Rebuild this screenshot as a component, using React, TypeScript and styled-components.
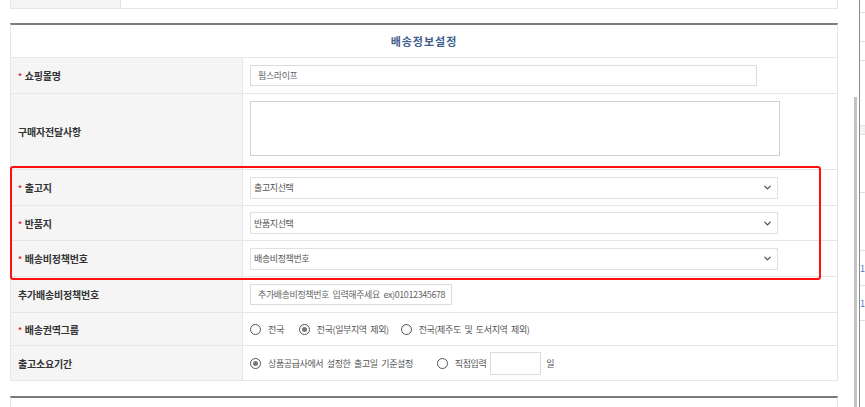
import React from 'react';
import styled, { createGlobalStyle } from 'styled-components';
import { ChevronDown } from 'lucide-react';

const GlobalStyle = createGlobalStyle`
    body {
        margin: 0;
        background: #ffffff;
        font-family: "Noto Sans CJK KR", "Noto Sans", sans-serif;
        color: #333;
    }
`;

const Page = styled.div`
    display: flex;
    height: 407px;
    overflow: hidden;
`;

const Content = styled.div`
    position: relative;
    width: 828px;
    padding: 0 16px 0 10px;
    flex-shrink: 0;
`;

const PrevTable = styled.div`
    display: grid;
    grid-template-columns: 110px 1fr;
    height: 8px;
    border: 1px solid #e6e6e6;
    border-top: none;
`;

const PrevLabel = styled.div`
    background: #f5f5f5;
    border-right: 1px solid #e3e3e3;
`;

const Section = styled.div<{ $gap: number }>`
    margin-top: ${({ $gap }) => $gap}px;
    border-top: 2px solid #7a7a7a;
    border-left: 1px solid #e6e6e6;
    border-right: 1px solid #e6e6e6;
`;

const HeaderRow = styled.div`
    height: 32px;
    display: flex;
    align-items: center;
    justify-content: center;
    border-bottom: 1px solid #e8e8e8;
    font-size: 11px;
    font-weight: 700;
    letter-spacing: 1px;
    color: #3f5f8f;
`;

const Row = styled.div<{ $h: number }>`
    display: grid;
    grid-template-columns: 232px 1fr;
    box-sizing: border-box;
    height: ${({ $h }) => $h}px;
    border-bottom: 1px solid #e6e6e6;
`;

const Label = styled.div`
    background: #f5f5f5;
    border-right: 1px solid #e6e6e6;
    display: flex;
    align-items: center;
    padding-left: 7px;
    font-size: 10px;
    font-weight: 700;
    letter-spacing: -0.2px;
    color: #333;
`;

const Req = styled.span`
    color: #e8102a;
    font-size: 8px;
    margin-right: 3px;
`;

const Cell = styled.div<{ $top?: boolean }>`
    display: flex;
    align-items: ${({ $top }) => ($top ? 'flex-start' : 'center')};
    padding: ${({ $top }) => ($top ? '7px 0 0 7px' : '0 0 0 7px')};
    font-size: 9px;
    letter-spacing: -0.4px;
    word-spacing: 2px;
    color: #555;
`;

const TextInput = styled.div<{ $w: number }>`
    width: ${({ $w }) => $w}px;
    height: 21px;
    box-sizing: border-box;
    border: 1px solid #dcdcdc;
    display: flex;
    align-items: center;
    padding-left: 7px;
    color: #666;
    white-space: nowrap;
`;

const TextArea = styled.div`
    width: 530px;
    height: 55px;
    box-sizing: border-box;
    border: 1px solid #d0d0d0;
    background: #fff;
`;

const Select = styled.div`
    width: 528px;
    height: 22px;
    box-sizing: border-box;
    border: 1px solid #e0e0e0;
    display: flex;
    align-items: center;
    justify-content: space-between;
    padding: 0 4px 0 3px;
    color: #555;
`;

const Radio = styled.span<{ $on?: boolean }>`
    width: 11px;
    height: 11px;
    box-sizing: border-box;
    border-radius: 50%;
    border: 1px solid #555;
    display: inline-flex;
    align-items: center;
    justify-content: center;
    margin-right: 7px;
    flex-shrink: 0;
    &::after {
        content: '';
        width: 5px;
        height: 5px;
        border-radius: 50%;
        background: ${({ $on }) => ($on ? '#777' : 'transparent')};
    }
`;

const Option = styled.label<{ $gap: number }>`
    display: inline-flex;
    align-items: center;
    white-space: nowrap;
    margin-right: ${({ $gap }) => $gap}px;
`;

const DayBox = styled.div`
    width: 51px;
    height: 23px;
    box-sizing: border-box;
    border: 1px solid #dcdcdc;
    margin: 0 5px 0 0;
`;

const Highlight = styled.div`
    position: absolute;
    left: 10px;
    top: 166px;
    width: 811px;
    height: 114px;
    box-sizing: border-box;
    border: 2px solid #ff1010;
    border-radius: 3px;
    pointer-events: none;
`;

const NextSection = styled.div`
    margin-top: 15px;
    height: 20px;
    border-top: 2px solid #7a7a7a;
    border-left: 1px solid #e6e6e6;
    border-right: 1px solid #e6e6e6;
`;

const Scroll = styled.div`
    width: 11px;
    display: flex;
    flex-direction: column;
    padding-top: 97px;
    align-items: flex-end;
    padding-right: 2px;
    box-sizing: border-box;
`;

const Thumb = styled.div`
    width: 3px;
    flex: 1;
    background: #c4c4c4;
`;

const Divider = styled.div`
    width: 2px;
    background: #8a8a8a;
`;

const Side = styled.div`
    flex: 1;
    display: flex;
    flex-direction: column;
`;

const SideRow = styled.div<{ $h: number; $shade?: boolean }>`
    height: ${({ $h }) => $h}px;
    border-bottom: 1px solid #e2e2e2;
    background: ${({ $shade }) => ($shade ? '#f3f3f3' : '#fff')};
    font-size: 9px;
    color: #4a7bc0;
    display: flex;
    align-items: center;
`;

type Field = { label: string; required?: boolean; height: number; body: React.ReactNode; top?: boolean };

const chevron = <ChevronDown size={11} strokeWidth={2.5} color="#444" />;

const fields: Field[] = [
    { label: '쇼핑몰명', required: true, height: 36, body: <TextInput $w={507}>펌스라이프</TextInput> },
    { label: '구매자전달사항', height: 76, top: true, body: <TextArea /> },
    { label: '출고지', required: true, height: 36, body: <Select>출고지선택{chevron}</Select> },
    { label: '반품지', required: true, height: 35, body: <Select>반품지선택{chevron}</Select> },
    { label: '배송비정책번호', required: true, height: 36, body: <Select>배송비정책번호{chevron}</Select> },
    {
        label: '추가배송비정책번호', height: 36,
        body: <TextInput $w={202}>추가배송비정책번호 입력해주세요 ex)01012345678</TextInput>,
    },
    {
        label: '배송권역그룹', required: true, height: 33,
        body: (
            <>
                <Option $gap={15}><Radio />전국</Option>
                <Option $gap={12}><Radio $on />전국(일부지역 제외)</Option>
                <Option $gap={0}><Radio />전국(제주도 및 도서지역 제외)</Option>
            </>
        ),
    },
    {
        label: '출고소요기간', height: 35,
        body: (
            <>
                <Option $gap={24}><Radio $on />상품공급사에서 설정한 출고일 기준설정</Option>
                <Option $gap={4}><Radio />직접입력</Option>
                <DayBox />일
            </>
        ),
    },
];

export default function App() {
    return (
        <>
            <GlobalStyle />
            <Page>
                <Content>
                    <PrevTable>
                        <PrevLabel />
                        <div />
                    </PrevTable>
                    <Section $gap={14}>
                        <HeaderRow>배송정보설정</HeaderRow>
                        {fields.map((f) => (
                            <Row key={f.label} $h={f.height}>
                                <Label>
                                    {f.required && <Req>*</Req>}
                                    {f.label}
                                </Label>
                                <Cell $top={f.top}>{f.body}</Cell>
                            </Row>
                        ))}
                    </Section>
                    <NextSection />
                    <Highlight />
                </Content>
                <Scroll>
                    <Thumb />
                </Scroll>
                <Divider />
                <Side>
                    <SideRow $h={12} />
                    <SideRow $h={28} />
                    <SideRow $h={18} />
                    <SideRow $h={64} />
                    <SideRow $h={8} $shade />
                    <SideRow $h={57} />
                    <SideRow $h={57} />
                    <SideRow $h={34}>1</SideRow>
                    <SideRow $h={34}>1</SideRow>
                </Side>
            </Page>
        </>
    );
}
